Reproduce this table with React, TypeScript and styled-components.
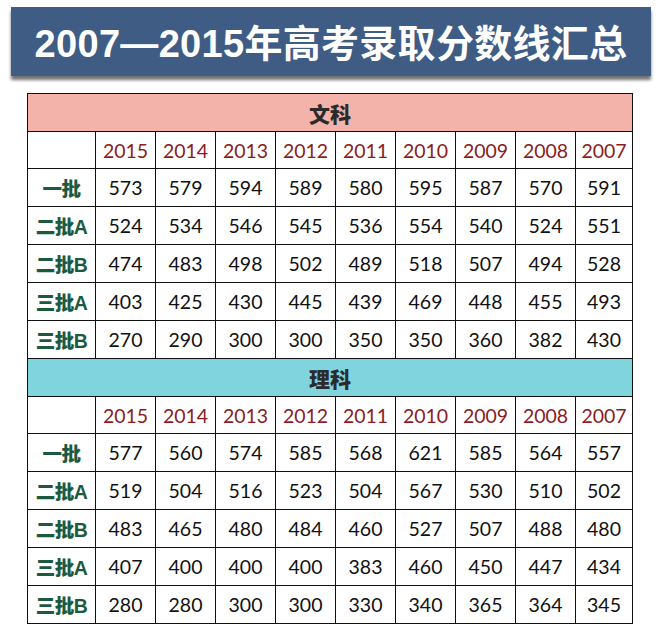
import React from "react";
import styled, { createGlobalStyle } from "styled-components";

const Global = createGlobalStyle`
  html, body { margin: 0; padding: 0; background: #ffffff; }
  body { width: 657px; height: 632px; overflow: hidden; }
`;

const Page = styled.div`
  width: 657px;
  height: 632px;
  background: #fff;
  padding-top: 7px;
  box-sizing: border-box;
`;

const Banner = styled.div`
  margin-left: 11px;
  width: 640px;
  height: 69px;
  background: #3e5c84;
  box-shadow: 0 4px 3px rgba(0, 0, 0, 0.55);
  display: flex;
  align-items: center;
  justify-content: center;
  box-sizing: border-box;
  padding-bottom: 2px;
`;

const Title = styled.h1`
  margin: 0;
  color: #fff;
  font-family: "Liberation Sans", "Noto Sans CJK SC", sans-serif;
  font-weight: 700;
  font-size: 38px;
  letter-spacing: 0.3px;
  white-space: nowrap;
`;

const Table = styled.table`
  margin: 17px 0 0 27px;
  border-collapse: collapse;
  table-layout: fixed;
  width: 605px;
  border: 1.5px solid #111;
`;

const Col = styled.col<{ $w: number }>`
  width: ${(p) => p.$w}px;
`;

const SectionCell = styled.td<{ $bg: string }>`
  background: ${(p) => p.$bg};
  height: 37px;
  padding: 0;
  border: 1px solid #111;
  text-align: center;
  font-family: "Noto Sans CJK SC", sans-serif;
  font-weight: 900;
  font-size: 21px;
  color: #2b2b2b;
`;

const YearCell = styled.td`
  height: 36px;
  padding: 0;
  border: 1px solid #111;
  text-align: center;
  font-family: "Lato", "Liberation Sans", sans-serif;
  font-size: 19.5px;
  color: #8a1c22;
`;

const LabelCell = styled.td`
  height: 37px;
  padding: 0;
  border: 1px solid #111;
  text-align: center;
  font-family: "Liberation Sans", "Noto Sans CJK SC", sans-serif;
  font-weight: 900;
  font-size: 19.5px;
  color: #1c5a3f;
  letter-spacing: -0.5px;
`;

const NumCell = styled.td`
  height: 37px;
  padding: 0;
  border: 1px solid #111;
  text-align: center;
  font-family: "Lato", "Liberation Sans", sans-serif;
  font-size: 19.5px;
  color: #111;
`;

const years = [2015, 2014, 2013, 2012, 2011, 2010, 2009, 2008, 2007];
const labels = ["一批", "二批A", "二批B", "三批A", "三批B"];

const wenke = [
  [573, 579, 594, 589, 580, 595, 587, 570, 591],
  [524, 534, 546, 545, 536, 554, 540, 524, 551],
  [474, 483, 498, 502, 489, 518, 507, 494, 528],
  [403, 425, 430, 445, 439, 469, 448, 455, 493],
  [270, 290, 300, 300, 350, 350, 360, 382, 430],
];

const like = [
  [577, 560, 574, 585, 568, 621, 585, 564, 557],
  [519, 504, 516, 523, 504, 567, 530, 510, 502],
  [483, 465, 480, 484, 460, 527, 507, 488, 480],
  [407, 400, 400, 400, 383, 460, 450, 447, 434],
  [280, 280, 300, 300, 330, 340, 365, 364, 345],
];

function Section({ title, bg, data }: { title: string; bg: string; data: number[][] }) {
  return (
    <>
      <tr>
        <SectionCell $bg={bg} colSpan={10}>
          {title}
        </SectionCell>
      </tr>
      <tr>
        <YearCell />
        {years.map((y) => (
          <YearCell key={y}>{y}</YearCell>
        ))}
      </tr>
      {data.map((row, i) => (
        <tr key={i}>
          <LabelCell>{labels[i]}</LabelCell>
          {row.map((v, j) => (
            <NumCell key={j}>{v}</NumCell>
          ))}
        </tr>
      ))}
    </>
  );
}

export default function App() {
  const widths = [68, 60, 60, 60, 60, 60, 60, 60, 60, 57];
  return (
    <Page>
      <Global />
      <Banner>
        <Title>2007—2015年高考录取分数线汇总</Title>
      </Banner>
      <Table>
        <colgroup>
          {widths.map((w, i) => (
            <Col key={i} $w={w} />
          ))}
        </colgroup>
        <tbody>
          <Section title="文科" bg="#f3b3ab" data={wenke} />
          <Section title="理科" bg="#7fd4de" data={like} />
        </tbody>
      </Table>
    </Page>
  );
}
